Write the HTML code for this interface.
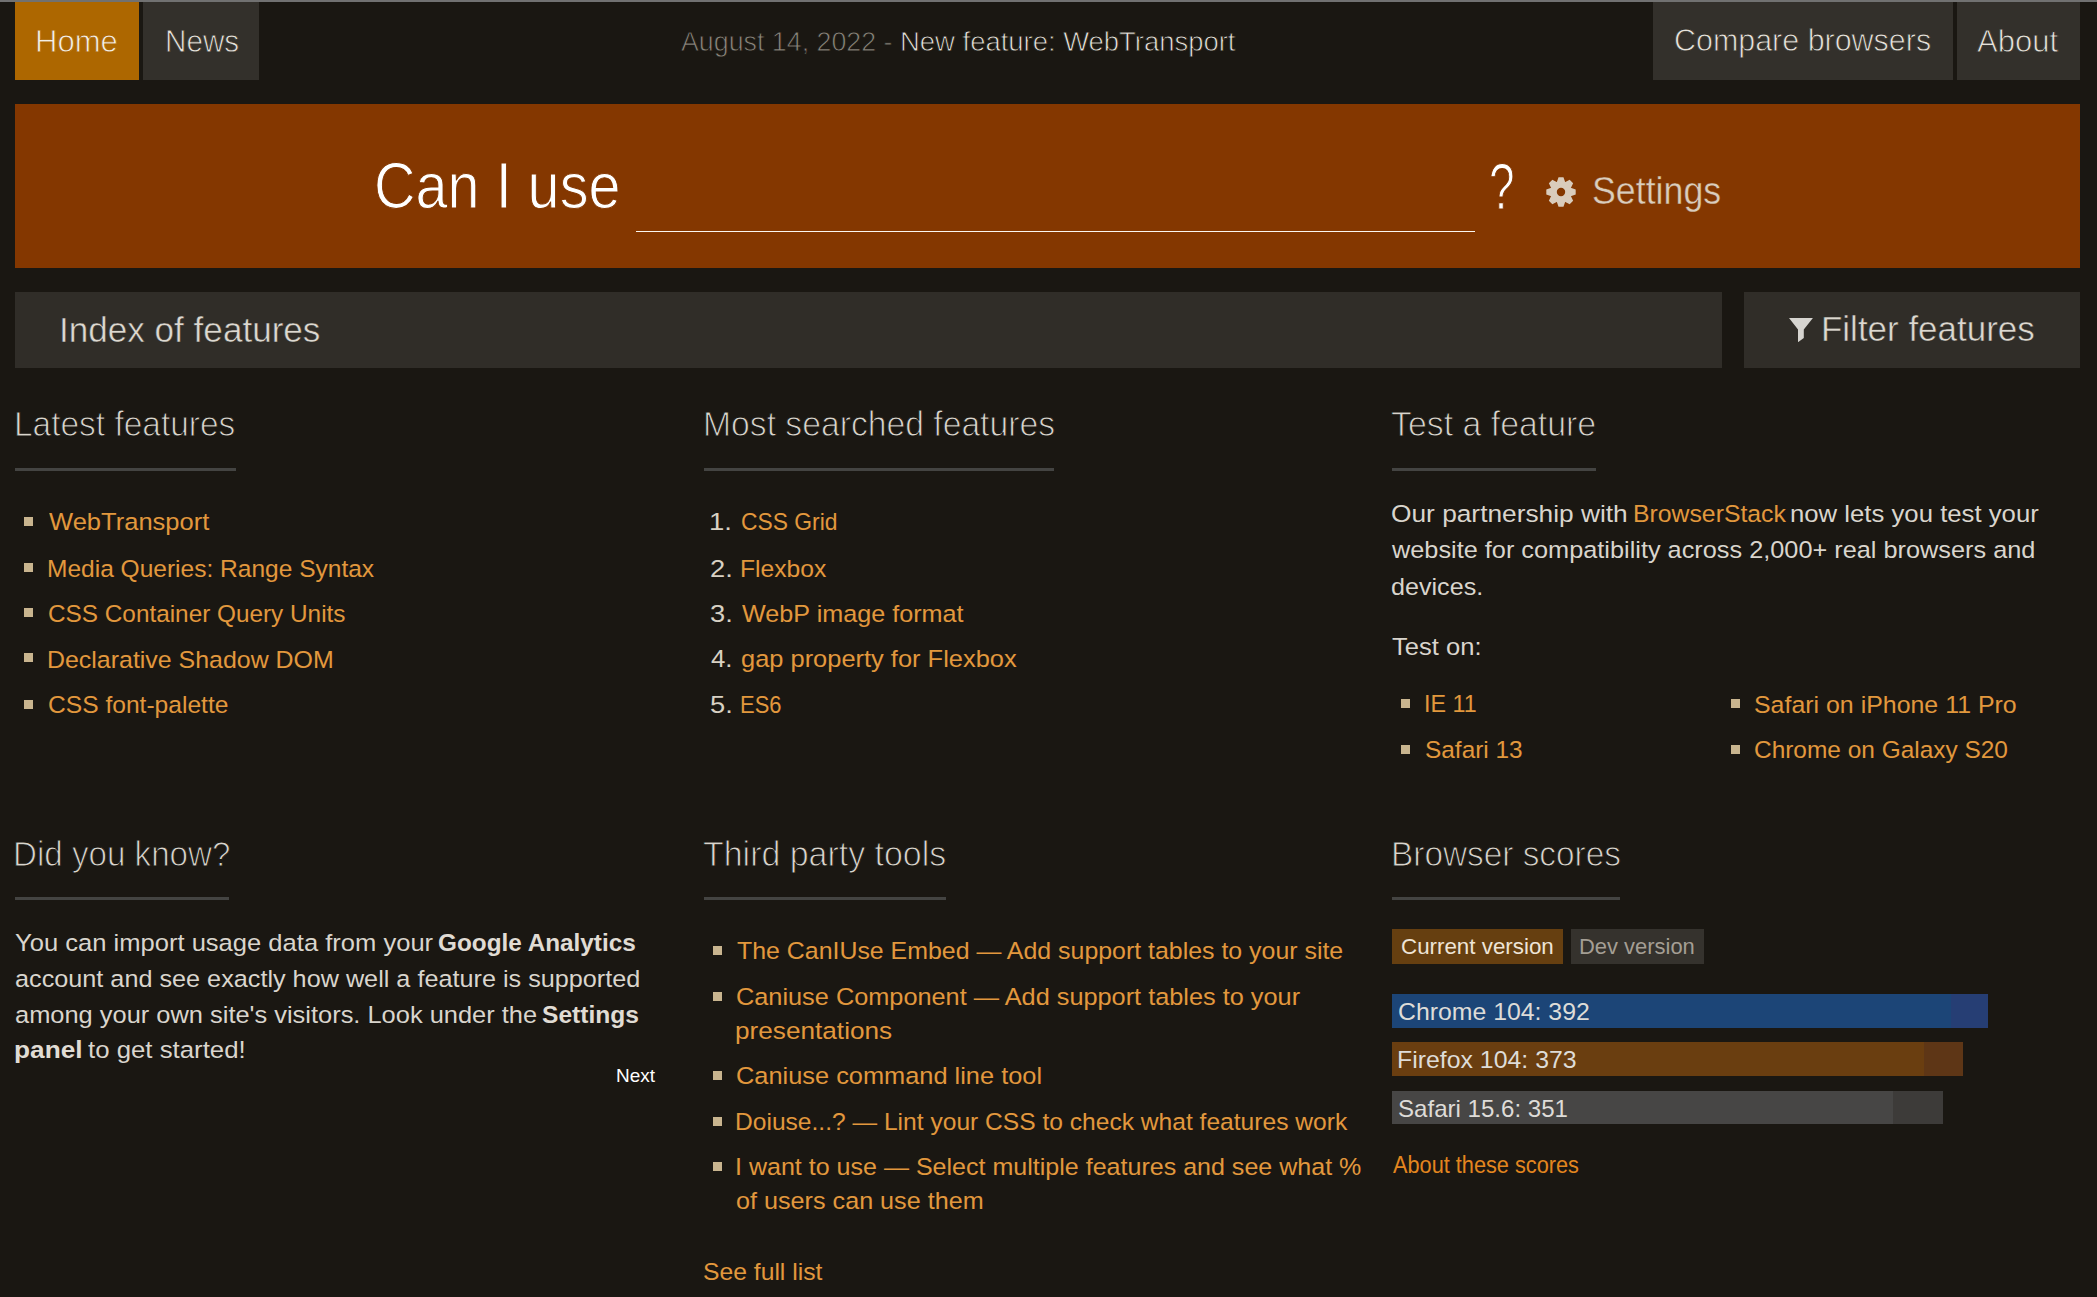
<!DOCTYPE html>
<html><head><meta charset="utf-8"><title>Can I use</title><style>
*{margin:0;padding:0;box-sizing:border-box}
html,body{width:2097px;height:1297px;overflow:hidden;background:#1a1712}
body{position:relative;font-family:"Liberation Sans",sans-serif}
.t{position:absolute;white-space:pre;transform-origin:0 0}
.b{position:absolute}
</style></head><body>
<div class="b" style="left:0px;top:0px;width:2097px;height:2px;background:#717171;"></div>
<div class="b" style="left:15px;top:2px;width:124px;height:78px;background:#ad6700;"></div>
<div class="b" style="left:143px;top:2px;width:116px;height:78px;background:#33302b;"></div>
<div class="b" style="left:1653px;top:2px;width:300px;height:78px;background:#33302b;"></div>
<div class="b" style="left:1957px;top:2px;width:123px;height:78px;background:#33302b;"></div>
<div class="b" style="left:15px;top:104px;width:2065px;height:164px;background:#843700;"></div>
<div class="b" style="left:636px;top:231px;width:839px;height:1px;background:#fbf6f0;"></div>
<div class="b" style="left:15px;top:292px;width:1707px;height:76px;background:#302d28;"></div>
<div class="b" style="left:1744px;top:292px;width:336px;height:76px;background:#302d28;"></div>
<div class="b" style="left:15px;top:468px;width:221px;height:3px;background:#444442;"></div>
<div class="b" style="left:704px;top:468px;width:350px;height:3px;background:#444442;"></div>
<div class="b" style="left:1392px;top:468px;width:204px;height:3px;background:#444442;"></div>
<div class="b" style="left:15px;top:897px;width:214px;height:3px;background:#444442;"></div>
<div class="b" style="left:704px;top:897px;width:242px;height:3px;background:#444442;"></div>
<div class="b" style="left:1392px;top:897px;width:228px;height:3px;background:#444442;"></div>
<div class="b" style="left:24px;top:517px;width:9px;height:9px;background:#c9b58f;"></div>
<div class="b" style="left:24px;top:563px;width:9px;height:9px;background:#c9b58f;"></div>
<div class="b" style="left:24px;top:608px;width:9px;height:9px;background:#c9b58f;"></div>
<div class="b" style="left:24px;top:653px;width:9px;height:9px;background:#c9b58f;"></div>
<div class="b" style="left:24px;top:700px;width:9px;height:9px;background:#c9b58f;"></div>
<div class="b" style="left:1401px;top:699px;width:9px;height:9px;background:#c9b58f;"></div>
<div class="b" style="left:1401px;top:745px;width:9px;height:9px;background:#c9b58f;"></div>
<div class="b" style="left:1731px;top:699px;width:9px;height:9px;background:#c9b58f;"></div>
<div class="b" style="left:1731px;top:745px;width:9px;height:9px;background:#c9b58f;"></div>
<div class="b" style="left:713px;top:946px;width:9px;height:9px;background:#c9b58f;"></div>
<div class="b" style="left:713px;top:992px;width:9px;height:9px;background:#c9b58f;"></div>
<div class="b" style="left:713px;top:1071px;width:9px;height:9px;background:#c9b58f;"></div>
<div class="b" style="left:713px;top:1117px;width:9px;height:9px;background:#c9b58f;"></div>
<div class="b" style="left:713px;top:1162px;width:9px;height:9px;background:#c9b58f;"></div>
<div class="b" style="left:1392px;top:929px;width:171px;height:35px;background:#663f10;"></div>
<div class="b" style="left:1571px;top:929px;width:133px;height:35px;background:#35322d;"></div>
<div class="b" style="left:1392px;top:994px;width:559px;height:34px;background:#1c4577;"></div>
<div class="b" style="left:1951px;top:994px;width:37px;height:34px;background:#263e74;"></div>
<div class="b" style="left:1392px;top:1042px;width:532px;height:34px;background:#6a3e10;"></div>
<div class="b" style="left:1924px;top:1042px;width:39px;height:34px;background:#5e3616;"></div>
<div class="b" style="left:1392px;top:1091px;width:501px;height:33px;background:#474645;"></div>
<div class="b" style="left:1893px;top:1091px;width:50px;height:33px;background:#3d3b39;"></div>
<svg class="b" style="left:1544.8px;top:175.8px" width="32" height="32" viewBox="0 0 32 32">
<path fill="#d9ccbc" fill-rule="evenodd" d="M11.78 6.28 L13.53 1.31 L18.47 1.31 L20.22 6.28 L19.89 6.14 L24.65 3.87 L28.13 7.35 L25.86 12.11 L25.72 11.78 L30.69 13.53 L30.69 18.47 L25.72 20.22 L25.86 19.89 L28.13 24.65 L24.65 28.13 L19.89 25.86 L20.22 25.72 L18.47 30.69 L13.53 30.69 L11.78 25.72 L12.11 25.86 L7.35 28.13 L3.87 24.65 L6.14 19.89 L6.28 20.22 L1.31 18.47 L1.31 13.53 L6.28 11.78 L6.14 12.11 L3.87 7.35 L7.35 3.87 L12.11 6.14 Z M16 11.8 A4.2 4.2 0 1 0 16 20.2 A4.2 4.2 0 1 0 16 11.8 Z"/>
</svg>
<svg class="b" style="left:1789px;top:318px" width="25" height="24" viewBox="0 0 25 24">
<path d="M-0.1 -0.1 L24 -0.1 L14.8 11.4 L14.8 19.9 L9.3 24 L9 24 L9 11.4 Z" fill="#d6d4d0"/>
</svg>
<span id="home" class="t" style="left:34.76px;top:25.85px;font-size:31px;line-height:31px;transform:scaleX(1.0020);color:#f3efe6;font-weight:normal;-webkit-text-stroke:0.8px #ad6700;">Home</span>
<span id="news" class="t" style="left:164.76px;top:25.65px;font-size:31px;line-height:31px;transform:scaleX(0.9565);color:#e6e2da;font-weight:normal;-webkit-text-stroke:0.8px #33302b;">News</span>
<span id="date" class="t" style="left:681.44px;top:28.64px;font-size:27px;line-height:27px;transform:scaleX(0.9923);color:#8c877e;font-weight:normal;-webkit-text-stroke:0.8px #1a1712;">August 14, 2022 -</span>
<span id="newf" class="t" style="left:899.76px;top:28.64px;font-size:27px;line-height:27px;transform:scaleX(1.0162);color:#e6e2da;font-weight:normal;-webkit-text-stroke:0.8px #1a1712;">New feature: WebTransport</span>
<span id="cmp" class="t" style="left:1674.20px;top:24.95px;font-size:31px;line-height:31px;transform:scaleX(0.9818);color:#e6e2da;font-weight:normal;-webkit-text-stroke:0.8px #33302b;">Compare browsers</span>
<span id="about" class="t" style="left:1977.44px;top:25.55px;font-size:31px;line-height:31px;transform:scaleX(1.0002);color:#e6e2da;font-weight:normal;-webkit-text-stroke:0.8px #33302b;">About</span>
<span id="caniuse" class="t" style="left:373.62px;top:154.01px;font-size:64px;line-height:64px;transform:scaleX(0.8997);color:#ffffff;font-weight:normal;-webkit-text-stroke:1px #843700;">Can I use</span>
<span id="q" class="t" style="left:1489.30px;top:154.81px;font-size:64px;line-height:64px;transform:scaleX(0.7190);color:#ffffff;font-weight:normal;-webkit-text-stroke:1.2px #843700;">?</span>
<span id="settings" class="t" style="left:1591.86px;top:171.83px;font-size:38px;line-height:38px;transform:scaleX(0.9405);color:#dacdbd;font-weight:normal;-webkit-text-stroke:0.4px #843700;">Settings</span>
<span id="index" class="t" style="left:58.96px;top:313.14px;font-size:35.5px;line-height:35.5px;transform:scaleX(0.9885);color:#dcd8d0;font-weight:normal;-webkit-text-stroke:0.5px #302d28;">Index of features</span>
<span id="filter" class="t" style="left:1821.30px;top:312.34px;font-size:35.5px;line-height:35.5px;transform:scaleX(0.9847);color:#dcd8d0;font-weight:normal;-webkit-text-stroke:0.5px #302d28;">Filter features</span>
<span id="h1" class="t" style="left:14.18px;top:407.14px;font-size:35.5px;line-height:35.5px;transform:scaleX(0.9425);color:#d9d5cd;font-weight:normal;-webkit-text-stroke:1px #1a1712;">Latest features</span>
<span id="h2" class="t" style="left:702.52px;top:407.14px;font-size:35.5px;line-height:35.5px;transform:scaleX(0.9489);color:#d9d5cd;font-weight:normal;-webkit-text-stroke:1px #1a1712;">Most searched features</span>
<span id="h3" class="t" style="left:1390.54px;top:407.14px;font-size:35.5px;line-height:35.5px;transform:scaleX(0.9537);color:#d9d5cd;font-weight:normal;-webkit-text-stroke:1px #1a1712;">Test a feature</span>
<span id="h4" class="t" style="left:12.86px;top:836.84px;font-size:35.5px;line-height:35.5px;transform:scaleX(0.9335);color:#d9d5cd;font-weight:normal;-webkit-text-stroke:1px #1a1712;">Did you know?</span>
<span id="h5" class="t" style="left:702.86px;top:836.84px;font-size:35.5px;line-height:35.5px;transform:scaleX(0.9557);color:#d9d5cd;font-weight:normal;-webkit-text-stroke:1px #1a1712;">Third party tools</span>
<span id="h6" class="t" style="left:1390.52px;top:836.84px;font-size:35.5px;line-height:35.5px;transform:scaleX(0.9402);color:#d9d5cd;font-weight:normal;-webkit-text-stroke:1px #1a1712;">Browser scores</span>
<span id="l0" class="t" style="left:48.66px;top:510.06px;font-size:24.5px;line-height:24.5px;transform:scaleX(1.0420);color:#e2983d;font-weight:normal;">WebTransport</span>
<span id="l1" class="t" style="left:46.76px;top:556.56px;font-size:24.5px;line-height:24.5px;transform:scaleX(1.0008);color:#e2983d;font-weight:normal;">Media Queries: Range Syntax</span>
<span id="l2" class="t" style="left:47.66px;top:601.86px;font-size:24.5px;line-height:24.5px;transform:scaleX(0.9930);color:#e2983d;font-weight:normal;">CSS Container Query Units</span>
<span id="l3" class="t" style="left:46.76px;top:647.56px;font-size:24.5px;line-height:24.5px;transform:scaleX(1.0174);color:#e2983d;font-weight:normal;">Declarative Shadow DOM</span>
<span id="l4" class="t" style="left:47.66px;top:693.06px;font-size:24.5px;line-height:24.5px;transform:scaleX(1.0038);color:#e2983d;font-weight:normal;">CSS font-palette</span>
<span id="m0" class="t" style="left:741.32px;top:510.26px;font-size:24.5px;line-height:24.5px;transform:scaleX(0.9320);color:#e2983d;font-weight:normal;">CSS Grid</span>
<span id="n0" class="t" style="left:708.76px;top:510.06px;font-size:24.5px;line-height:24.5px;transform:scaleX(1.1259);color:#d8d1c3;font-weight:normal;">1.</span>
<span id="m1" class="t" style="left:740.42px;top:556.76px;font-size:24.5px;line-height:24.5px;transform:scaleX(1.0060);color:#e2983d;font-weight:normal;">Flexbox</span>
<span id="n1" class="t" style="left:709.66px;top:556.56px;font-size:24.5px;line-height:24.5px;transform:scaleX(1.1155);color:#d8d1c3;font-weight:normal;">2.</span>
<span id="m2" class="t" style="left:742.22px;top:601.86px;font-size:24.5px;line-height:24.5px;transform:scaleX(1.0274);color:#e2983d;font-weight:normal;">WebP image format</span>
<span id="n2" class="t" style="left:709.66px;top:602.06px;font-size:24.5px;line-height:24.5px;transform:scaleX(1.1155);color:#d8d1c3;font-weight:normal;">3.</span>
<span id="m3" class="t" style="left:741.32px;top:646.56px;font-size:24.5px;line-height:24.5px;transform:scaleX(1.0381);color:#e2983d;font-weight:normal;">gap property for Flexbox</span>
<span id="n3" class="t" style="left:710.66px;top:646.56px;font-size:24.5px;line-height:24.5px;transform:scaleX(1.0535);color:#d8d1c3;font-weight:normal;">4.</span>
<span id="m4" class="t" style="left:740.42px;top:693.26px;font-size:24.5px;line-height:24.5px;transform:scaleX(0.8953);color:#e2983d;font-weight:normal;">ES6</span>
<span id="n4" class="t" style="left:709.66px;top:693.26px;font-size:24.5px;line-height:24.5px;transform:scaleX(1.1155);color:#d8d1c3;font-weight:normal;">5.</span>
<span id="p1a" class="t" style="left:1391.10px;top:501.66px;font-size:24.5px;line-height:24.5px;transform:scaleX(1.0731);color:#d9d5cd;font-weight:normal;">Our partnership with</span>
<span id="p1b" class="t" style="left:1632.76px;top:501.86px;font-size:24.5px;line-height:24.5px;transform:scaleX(1.0116);color:#e2983d;font-weight:normal;">BrowserStack</span>
<span id="p1c" class="t" style="left:1790.20px;top:501.66px;font-size:24.5px;line-height:24.5px;transform:scaleX(1.0499);color:#d9d5cd;font-weight:normal;">now lets you test your</span>
<span id="p2" class="t" style="left:1392.26px;top:538.26px;font-size:24.5px;line-height:24.5px;transform:scaleX(1.0327);color:#d9d5cd;font-weight:normal;">website for compatibility across 2,000+ real browsers and</span>
<span id="p3" class="t" style="left:1391.10px;top:574.66px;font-size:24.5px;line-height:24.5px;transform:scaleX(1.0257);color:#d9d5cd;font-weight:normal;">devices.</span>
<span id="p4" class="t" style="left:1392.00px;top:634.56px;font-size:24.5px;line-height:24.5px;transform:scaleX(1.0430);color:#d9d5cd;font-weight:normal;">Test on:</span>
<span id="t1" class="t" style="left:1423.86px;top:692.46px;font-size:24.5px;line-height:24.5px;transform:scaleX(0.9511);color:#e2983d;font-weight:normal;">IE 11</span>
<span id="t2" class="t" style="left:1424.86px;top:738.36px;font-size:24.5px;line-height:24.5px;transform:scaleX(0.9963);color:#e2983d;font-weight:normal;">Safari 13</span>
<span id="t3" class="t" style="left:1754.32px;top:692.66px;font-size:24.5px;line-height:24.5px;transform:scaleX(1.0169);color:#e2983d;font-weight:normal;">Safari on iPhone 11 Pro</span>
<span id="t4" class="t" style="left:1754.32px;top:738.16px;font-size:24.5px;line-height:24.5px;transform:scaleX(0.9971);color:#e2983d;font-weight:normal;">Chrome on Galaxy S20</span>
<span id="d1a" class="t" style="left:14.66px;top:930.56px;font-size:24.5px;line-height:24.5px;transform:scaleX(1.0431);color:#d9d5cd;font-weight:normal;">You can import usage data from your</span>
<span id="d1b" class="t" style="left:438.42px;top:930.56px;font-size:24.5px;line-height:24.5px;transform:scaleX(0.9928);color:#e0dcd4;font-weight:bold;">Google Analytics</span>
<span id="d2" class="t" style="left:14.66px;top:966.56px;font-size:24.5px;line-height:24.5px;transform:scaleX(1.0295);color:#d9d5cd;font-weight:normal;">account and see exactly how well a feature is supported</span>
<span id="d3a" class="t" style="left:14.66px;top:1003.06px;font-size:24.5px;line-height:24.5px;transform:scaleX(1.0378);color:#d9d5cd;font-weight:normal;">among your own site's visitors. Look under the</span>
<span id="d3b" class="t" style="left:542.10px;top:1003.06px;font-size:24.5px;line-height:24.5px;transform:scaleX(1.0029);color:#e0dcd4;font-weight:bold;">Settings</span>
<span id="d4a" class="t" style="left:13.76px;top:1038.36px;font-size:24.5px;line-height:24.5px;transform:scaleX(1.0715);color:#e0dcd4;font-weight:bold;">panel</span>
<span id="d4b" class="t" style="left:88.10px;top:1038.36px;font-size:24.5px;line-height:24.5px;transform:scaleX(1.0527);color:#d9d5cd;font-weight:normal;">to get started!</span>
<span id="next" class="t" style="left:616.20px;top:1066.74px;font-size:18.5px;line-height:18.5px;transform:scaleX(1.0263);color:#ffffff;font-weight:normal;">Next</span>
<span id="tp1" class="t" style="left:736.88px;top:939.06px;font-size:24.5px;line-height:24.5px;transform:scaleX(1.0163);color:#e2983d;font-weight:normal;">The CanIUse Embed — Add support tables to your site</span>
<span id="tp2a" class="t" style="left:735.98px;top:985.36px;font-size:24.5px;line-height:24.5px;transform:scaleX(1.0329);color:#e2983d;font-weight:normal;">Caniuse Component — Add support tables to your</span>
<span id="tp2b" class="t" style="left:735.08px;top:1019.16px;font-size:24.5px;line-height:24.5px;transform:scaleX(1.0684);color:#e2983d;font-weight:normal;">presentations</span>
<span id="tp3" class="t" style="left:735.98px;top:1064.16px;font-size:24.5px;line-height:24.5px;transform:scaleX(1.0356);color:#e2983d;font-weight:normal;">Caniuse command line tool</span>
<span id="tp4" class="t" style="left:735.08px;top:1109.96px;font-size:24.5px;line-height:24.5px;transform:scaleX(1.0035);color:#e2983d;font-weight:normal;">Doiuse...? — Lint your CSS to check what features work</span>
<span id="tp5a" class="t" style="left:735.08px;top:1155.16px;font-size:24.5px;line-height:24.5px;transform:scaleX(1.0220);color:#e2983d;font-weight:normal;">I want to use — Select multiple features and see what %</span>
<span id="tp5b" class="t" style="left:735.98px;top:1189.46px;font-size:24.5px;line-height:24.5px;transform:scaleX(1.0275);color:#e2983d;font-weight:normal;">of users can use them</span>
<span id="seefull" class="t" style="left:702.86px;top:1260.26px;font-size:24.5px;line-height:24.5px;transform:scaleX(1.0077);color:#e2983d;font-weight:normal;">See full list</span>
<span id="cur" class="t" style="left:1400.54px;top:936.37px;font-size:22px;line-height:22px;transform:scaleX(1.0156);color:#eee4d6;font-weight:normal;">Current version</span>
<span id="dev" class="t" style="left:1579.08px;top:936.37px;font-size:22px;line-height:22px;transform:scaleX(0.9968);color:#a49e94;font-weight:normal;">Dev version</span>
<span id="chr" class="t" style="left:1397.86px;top:999.78px;font-size:24px;line-height:24px;transform:scaleX(1.0341);color:#dedcd8;font-weight:normal;">Chrome 104: 392</span>
<span id="ff" class="t" style="left:1396.86px;top:1047.68px;font-size:24px;line-height:24px;transform:scaleX(1.0355);color:#dedcd8;font-weight:normal;">Firefox 104: 373</span>
<span id="saf" class="t" style="left:1397.86px;top:1097.18px;font-size:24px;line-height:24px;transform:scaleX(1.0031);color:#dedcd8;font-weight:normal;">Safari 15.6: 351</span>
<span id="abt" class="t" style="left:1393.00px;top:1154.33px;font-size:23px;line-height:23px;transform:scaleX(0.9442);color:#e3861f;font-weight:normal;">About these scores</span>
</body></html>
